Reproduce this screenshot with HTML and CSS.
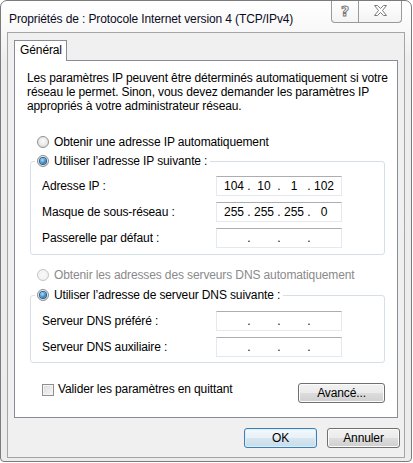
FILE: index.html
```html
<!DOCTYPE html>
<html lang="fr">
<head>
<meta charset="utf-8">
<title>Propriétés IPv4</title>
<link rel="stylesheet" href="styles.css">
</head>
<body>
<div class="window">
  <div class="titlebar">
    <div class="title">Propriétés de : Protocole Internet version 4 (TCP/IPv4)</div>
    <div class="caption-buttons">
      <div class="cap-btn help"><span>?</span></div>
      <div class="cap-btn close">
        <svg width="13" height="11" viewBox="0 0 13 11"><polygon points="0.5,0.5 3.5,0.5 6.5,3.5 9.5,0.5 12.5,0.5 8.5,5.5 12.5,10.5 9.5,10.5 6.5,7.5 3.5,10.5 0.5,10.5 4.5,5.5" fill="#fff" stroke="#7a7a7a" stroke-width="1"/></svg>
      </div>
    </div>
  </div>
  <div class="client">
    <div class="tabstrip"><div class="tab">Général</div></div>
    <div class="panel">
      <p class="desc">Les paramètres IP peuvent être déterminés automatiquement si votre<br>réseau le permet. Sinon, vous devez demander les paramètres IP<br>appropriés à votre administrateur réseau.</p>
      <div class="option opt-ip-auto"><span class="radio"></span><span>Obtenir une adresse IP automatiquement</span></div>
      <fieldset class="group group-ip">
        <legend class="option legend"><span class="radio checked"></span><span>Utiliser l’adresse IP suivante :</span></legend>
        <div class="field first"><span class="label">Adresse IP :</span><div class="ipbox"><span>104</span><i>.</i><span>10</span><i>.</i><span>1</span><i>.</i><span>102</span></div></div>
        <div class="field"><span class="label">Masque de sous-réseau :</span><div class="ipbox"><span>255</span><i>.</i><span>255</span><i>.</i><span>255</span><i>.</i><span>0</span></div></div>
        <div class="field"><span class="label">Passerelle par défaut :</span><div class="ipbox"><span></span><i>.</i><span></span><i>.</i><span></span><i>.</i><span></span></div></div>
      </fieldset>
      <div class="option disabled opt-dns-auto"><span class="radio"></span><span>Obtenir les adresses des serveurs DNS automatiquement</span></div>
      <fieldset class="group group-dns">
        <legend class="option legend"><span class="radio checked"></span><span>Utiliser l’adresse de serveur DNS suivante :</span></legend>
        <div class="field first"><span class="label">Serveur DNS préféré :</span><div class="ipbox"><span></span><i>.</i><span></span><i>.</i><span></span><i>.</i><span></span></div></div>
        <div class="field"><span class="label">Serveur DNS auxiliaire :</span><div class="ipbox"><span></span><i>.</i><span></span><i>.</i><span></span><i>.</i><span></span></div></div>
      </fieldset>
      <div class="bottom-row">
        <div class="check"><span class="checkbox"></span><span>Valider les paramètres en quittant</span></div>
        <div class="btn btn-adv">Avancé...</div>
      </div>
    </div>
    <div class="footer">
      <div class="btn btn-default">OK</div>
      <div class="btn">Annuler</div>
    </div>
  </div>
</div>
</body>
</html>
```
FILE: styles.css
```css
* { box-sizing: border-box; }
html, body { margin: 0; padding: 0; background: #ffffff; }
body {
  font-family: "Liberation Sans", Arial, sans-serif;
  font-size: 12px;
  letter-spacing: -0.12px;
  color: #000;
}
.window {
  width: 412px;
  height: 462px;
  border: 1px solid #7b7b7b;
  border-radius: 7px 7px 4px 4px;
  background: linear-gradient(#ffffff 0, #f9f9f9 26px, #eeeeee 60px, #ececec 100%);
  display: flex;
  flex-direction: column;
}
.titlebar {
  height: 31px;
  display: flex;
  align-items: flex-start;
  flex: none;
}
.title {
  padding: 10px 0 0 8px;
  line-height: 16px;
  color: #0b0b1e;
  white-space: nowrap;
}
.caption-buttons {
  margin-left: auto;
  margin-right: 9px;
  display: flex;
}
.cap-btn {
  height: 22px;
  border: 1px solid #9a9a9a;
  border-top: none;
  background: linear-gradient(#ffffff, #f4f4f4);
  display: flex;
  align-items: center;
  justify-content: center;
}
.help {
  width: 28px;
  border-radius: 0 0 0 4px;
}
.help span {
  font-family: "DejaVu Sans", sans-serif;
  font-weight: bold;
  font-size: 14px;
  line-height: 14px;
  color: #fff;
  -webkit-text-stroke: 1px #7a7a7a;
  margin-top: -2px;
}
.close {
  width: 43px;
  border-left: none;
  border-radius: 0 0 4px 0;
}
.close svg { margin-top: -2px; }
.client {
  flex: 1;
  margin: 0 6px 3px 6px;
  border: 1px solid #a5a5a5;
  background: #f0f0f0;
  padding: 7px 6px 0 6px;
  display: flex;
  flex-direction: column;
}
.tabstrip { display: flex; height: 20px; }
.tab {
  position: relative;
  z-index: 1;
  width: 53px;
  height: 21px;
  border: 1px solid #898c95;
  border-bottom: none;
  background: #fff;
  text-align: center;
  line-height: 19px;
  padding-left: 1px;
}
.panel {
  height: 358px;
  border: 1px solid #898c95;
  background: #fff;
  padding: 0 12px;
}
.desc {
  margin: 10px 0 0 0;
  line-height: 14px;
  white-space: nowrap;
}
.option {
  display: flex;
  align-items: center;
  height: 16px;
  line-height: 16px;
  white-space: nowrap;
}
.opt-ip-auto { margin: 21px 0 0 10px; }
.opt-dns-auto { margin: 12px 0 0 10px; }
.disabled { color: #8a8a8a; }
.radio {
  width: 12px;
  height: 12px;
  border-radius: 50%;
  border: 1px solid #8e8f8f;
  background: radial-gradient(circle at 50% 40%, #fbfbfb 0, #e9e9e9 55%, #d2d2d2 100%);
  margin-right: 5px;
  flex: none;
  display: flex;
  align-items: center;
  justify-content: center;
}
.radio.checked::after {
  content: "";
  width: 6px;
  height: 6px;
  border-radius: 50%;
  background: radial-gradient(circle at 40% 35%, #aee0fb 0, #3a8fd0 55%, #1a4f84 100%);
  box-shadow: 0 0 0 1px #2f5f86;
}
.disabled .radio {
  border-color: #c4c4c4;
  background: radial-gradient(circle, #fafafa 0, #eeeeee 100%);
}
.group {
  margin: 0 0 0 3px;
  padding: 0 11px;
  border: 1px solid #d5dfe5;
  border-radius: 3px;
  min-width: 0;
}
.group-ip { margin-top: 3px; padding-bottom: 6px; }
.group-dns { margin-top: 4px; padding-bottom: 5px; }
.legend {
  margin-left: -7px;
  padding: 0 3px 0 2px;
}
.field {
  display: flex;
  align-items: center;
  height: 20px;
  margin-top: 6px;
}
.group-ip .field.first { margin-top: 7px; }
.group-dns .field.first { margin-top: 8px; }
.label { width: 174px; flex: none; white-space: nowrap; }
.ipbox {
  width: 126px;
  height: 20px;
  border: 1px solid #e3e9ef;
  border-top-color: #abadb3;
  background: #fff;
  display: grid;
  grid-template-columns: 24px 6px 24px 6px 24px 6px 24px;
  padding-left: 5px;
  align-items: center;
  line-height: 16px;
  letter-spacing: 0;
}
.ipbox span { text-align: center; }
.ipbox i { font-style: normal; text-align: center; }
.bottom-row {
  margin-top: 20px;
  display: flex;
  justify-content: space-between;
  align-items: flex-start;
}
.check {
  display: flex;
  align-items: center;
  height: 13px;
  margin-left: 15px;
  line-height: 13px;
  white-space: nowrap;
}
.checkbox {
  width: 12px;
  height: 12px;
  border: 1px solid #8f8f8f;
  background: linear-gradient(135deg, #dcdcdc, #f6f6f6);
  box-shadow: inset 0 0 0 1px #f4f4f4;
  margin-right: 4px;
  flex: none;
}
.btn {
  height: 20px;
  border: 1px solid #707070;
  border-radius: 3px;
  background: linear-gradient(#f2f2f2 0, #ebebeb 50%, #dddddd 50%, #cfcfcf 100%);
  box-shadow: inset 0 0 0 1px #fcfcfc;
  display: flex;
  align-items: center;
  justify-content: center;
  line-height: 16px;
}
.btn-adv { width: 87px; }
.footer {
  margin-top: 10px;
  margin-right: -2px;
  display: flex;
  justify-content: flex-end;
  gap: 10px;
}
.footer .btn { width: 73px; }
.btn-default {
  border-color: #3c7fb1;
  background: linear-gradient(#f4f9fc 0, #e8f1f7 50%, #d7e6f0 50%, #c8dcea 100%);
  box-shadow: inset 0 0 0 1px #d9f0fc;
}
```
